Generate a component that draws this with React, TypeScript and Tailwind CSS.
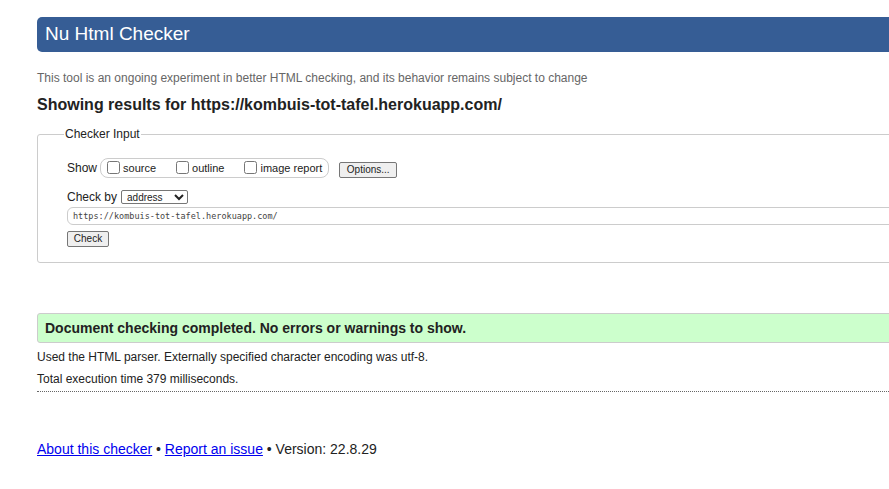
import React from 'react';

const sans = { fontFamily: '"Liberation Sans", Arial, sans-serif' };

export default function App() {
  return (
    <div className="w-screen overflow-hidden bg-white text-[#222]" style={sans}>
      <div className="ml-[37px] w-[1000px] pt-[17px] pb-10">
        <h1 className="flex h-[35px] items-center rounded-l-[5px] bg-[#365d95] pl-[8px] text-[19px] text-white">
          Nu Html Checker
        </h1>

        <p className="mt-[17px] text-[12px] text-[#666]">
          This tool is an ongoing experiment in better HTML checking, and its behavior remains subject to change
        </p>

        <h2 className="mt-[6px] text-[16px] font-bold">
          Showing results for https://kombuis-tot-tafel.herokuapp.com/
        </h2>

        {/* Checker input */}
        <fieldset className="mt-[11px] h-[135px] rounded-[3px] border border-[#ccc] pl-[29px] pt-[18px]">
          <legend className="-ml-[3px] px-[1px] text-[12px] leading-[12px]">Checker Input</legend>

          <div className="flex items-center text-[12px]">
            <span>Show</span>
            <div className="ml-[3px] flex h-[20px] items-center rounded-[8px] border border-[#ccc] pl-[6px] pr-[6px] text-[11px]">
              <label className="flex items-center">
                <input type="checkbox" className="m-0 -mt-[2px] h-[13px] w-[13px]" />
                <span className="ml-[3px]">source</span>
              </label>
              <label className="ml-[20px] flex items-center">
                <input type="checkbox" className="m-0 -mt-[2px] h-[13px] w-[13px]" />
                <span className="ml-[3px]">outline</span>
              </label>
              <label className="ml-[20px] flex items-center">
                <input type="checkbox" className="m-0 -mt-[2px] h-[13px] w-[13px]" />
                <span className="ml-[3px]">image report</span>
              </label>
            </div>
            <button className="ml-[10px] mt-[3px] h-[16px] w-[58px] rounded-[2px] border border-[#767676] bg-[#efefef] text-[10px] leading-none">
              Options...
            </button>
          </div>

          <div className="mt-[10px] flex items-center text-[12px]">
            <span>Check by</span>
            <select
              className="ml-[4px] h-[14px] w-[67px] rounded-[2px] border border-[#767676] bg-white py-0 pl-[1px] text-[10px] leading-none"
              defaultValue="address"
            >
              <option value="address">address</option>
              <option value="file">file upload</option>
              <option value="text">text input</option>
            </select>
          </div>

          <div
            className="mt-px flex h-[18px] items-center rounded-[6px] border border-[#ccc] pl-[5px] text-[8.5px] text-[#444]"
            style={{ fontFamily: '"DejaVu Sans Mono", "Liberation Mono", monospace' }}
          >
            https://kombuis-tot-tafel.herokuapp.com/
          </div>

          <button className="mt-[6px] h-[16px] w-[42px] rounded-[2px] border border-[#767676] bg-[#efefef] text-[10px] leading-none">
            Check
          </button>
        </fieldset>

        {/* Result */}
        <div className="mt-[50px] flex h-[30px] items-center rounded-[3px] border border-[#ccc] bg-[#ccffcc] pl-[7px] text-[14px] font-bold">
          Document checking completed. No errors or warnings to show.
        </div>
        <p className="mt-[5px] text-[12px]">Used the HTML parser. Externally specified character encoding was utf-8.</p>
        <p className="mt-[4px] text-[12px]">Total execution time 379 milliseconds.</p>
        <div className="mt-[3px] border-b border-dotted border-[#666]" />

        <footer className="mt-[47px] text-[14px]">
          <a href="#" className="text-[#0000ee] underline">About this checker</a>
          {' • '}
          <a href="#" className="text-[#0000ee] underline">Report an issue</a>
          {' • Version: 22.8.29'}
        </footer>
      </div>
    </div>
  );
}
